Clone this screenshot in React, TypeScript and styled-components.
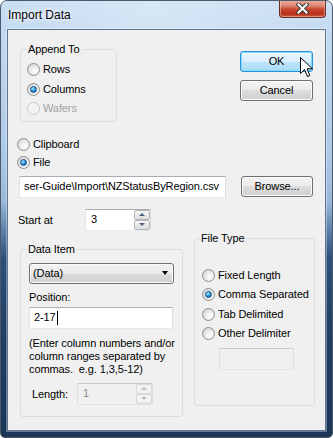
import styled, { createGlobalStyle } from "styled-components"

const GlobalStyle = createGlobalStyle`
  html, body {
    margin: 0;
    padding: 0;
    background: #ffffff;
  }
  body {
    font-family: "Liberation Sans", Arial, sans-serif;
    font-size: 11px;
    letter-spacing: -0.1px;
    color: #000;
  }
`

const Window = styled.div`
  position: relative;
  width: 333px;
  height: 438px;
  box-sizing: border-box;
  display: flex;
  flex-direction: column;
  border: 1px solid #4b5a6b;
  border-radius: 7px 7px 5px 5px;
  overflow: hidden;
  background: linear-gradient(
    180deg,
    #c9def3 0px,
    #bdd6ef 60px,
    #afcae7 150px,
    #9ab8d9 200px,
    #577ca6 232px,
    #2d4f79 258px,
    #213f66 330px,
    #1b3556 438px
  );
`

const TitleBar = styled.div`
  height: 28px;
  display: flex;
  align-items: flex-start;
  justify-content: space-between;
  background: linear-gradient(
    90deg,
    rgba(255, 255, 255, 0) 0%,
    rgba(255, 255, 255, 0.28) 45%,
    rgba(255, 255, 255, 0.05) 100%
  );
`

const Title = styled.span`
  margin: 7px 0 0 7px;
  font-size: 12px;
  line-height: 14px;
  letter-spacing: 0;
  text-shadow: 0 0 6px #ffffff, 0 0 3px #ffffff;
`

const CloseButton = styled.div`
  width: 47px;
  height: 18px;
  margin: -1px 6px 0 0;
  box-sizing: border-box;
  display: flex;
  align-items: center;
  justify-content: center;
  border: 1px solid #6a2a1f;
  border-top: none;
  border-radius: 0 0 4px 4px;
  background: linear-gradient(180deg, #eab1a3 0%, #dc8470 35%, #c8462f 55%, #b8321c 80%, #cf5a3c 100%);
  box-shadow: inset 0 0 0 1px rgba(255, 220, 210, 0.45);
`

const Client = styled.div`
  flex: 1;
  margin: 0 6px 6px 6px;
  box-sizing: border-box;
  border: 1px solid #5f7590;
  background: #f0f0f0;
  padding: 13px 0 0 9px;
  box-shadow: 0 0 0 1px rgba(255, 255, 255, 0.35);
`

const TopRow = styled.div`
  display: flex;
  align-items: flex-start;
  justify-content: space-between;
  padding-right: 12px;
`

const GroupBox = styled.fieldset<{ $w: number; $pad: string }>`
  margin: 0;
  min-width: 0;
  width: ${(p) => p.$w}px;
  box-sizing: border-box;
  border: 1px solid #d5dfe5;
  border-radius: 3px;
  padding: ${(p) => p.$pad};
  display: flex;
  flex-direction: column;
  align-items: flex-start;
`

const Legend = styled.legend<{ $shift: number }>`
  margin-left: ${(p) => p.$shift}px;
  padding: 0 2px 0 1px;
  line-height: 13px;
`

const Option = styled.label<{ $h: number; $disabled?: boolean }>`
  display: flex;
  align-items: center;
  gap: 3px;
  height: ${(p) => p.$h}px;
  line-height: 13px;
  white-space: nowrap;
  color: ${(p) => (p.$disabled ? "#a0a0a0" : "#000")};
`

const RadioDot = styled.span<{ $checked?: boolean; $disabled?: boolean }>`
  position: relative;
  width: 13px;
  height: 13px;
  box-sizing: border-box;
  border-radius: 50%;
  border: 1px solid ${(p) => (p.$disabled ? "#c6c6c6" : "#8c8e90")};
  background: ${(p) =>
    p.$disabled
      ? "#f4f4f4"
      : "radial-gradient(circle at 65% 65%, #fdfdfd 0%, #f2f2f2 30%, #dcdcdc 70%, #cfcfcf 100%)"};
  flex: none;

  &::after {
    content: "";
    display: ${(p) => (p.$checked ? "block" : "none")};
    position: absolute;
    left: 2px;
    top: 2px;
    width: 7px;
    height: 7px;
    box-sizing: border-box;
    border-radius: 50%;
    border: 1px solid #174f83;
    background: radial-gradient(circle at 35% 30%, #a6e6ff 0%, #4ab3ec 35%, #1a74bf 70%, #0f4f8d 100%);
  }
`

const ButtonColumn = styled.div`
  display: flex;
  flex-direction: column;
  gap: 8px;
  margin-top: 8px;
`

const Button = styled.div<{ $w: number; $default?: boolean }>`
  width: ${(p) => p.$w}px;
  height: 21px;
  box-sizing: border-box;
  display: flex;
  align-items: center;
  justify-content: center;
  border-radius: 3px;
  line-height: 13px;
  border: 1px solid ${(p) => (p.$default ? "#2f8fd8" : "#707070")};
  background: ${(p) =>
    p.$default
      ? "linear-gradient(180deg, #eaf6fd 0%, #d9f0fc 50%, #bee6fd 50%, #a9daf5 100%)"
      : "linear-gradient(180deg, #f2f2f2 0%, #ebebeb 50%, #dddddd 50%, #cfcfcf 100%)"};
  box-shadow: inset 0 0 0 1px ${(p) => (p.$default ? "#7fdcfd" : "#fcfcfc")};
`

const SourceList = styled.div`
  display: flex;
  flex-direction: column;
  margin-top: 14px;
`

const PathRow = styled.div`
  display: flex;
  align-items: center;
  margin-top: 4px;
  padding-left: 2px;
  gap: 15px;
`

const Edit = styled.div<{ $w: number; $disabled?: boolean }>`
  width: ${(p) => p.$w}px;
  height: 22px;
  box-sizing: border-box;
  display: flex;
  align-items: center;
  padding: 0 4px;
  white-space: nowrap;
  overflow: hidden;
  line-height: 13px;
  border: 1px solid;
  border-color: ${(p) =>
    p.$disabled ? "#c9ccd0 #dcdee2 #e2e4e8 #dcdee2" : "#abadb3 #dbdfe6 #e3e9ef #e2e3ea"};
  background: ${(p) => (p.$disabled ? "#f0f0f0" : "#ffffff")};
  color: ${(p) => (p.$disabled ? "#8a8a8a" : "#000")};
`

const Caret = styled.span`
  display: inline-block;
  width: 1px;
  height: 14px;
  margin-left: 1px;
  background: #000;
`

const FieldRow = styled.div<{ $top: number; $indent: number }>`
  display: flex;
  align-items: center;
  margin-top: ${(p) => p.$top}px;
  margin-left: ${(p) => p.$indent}px;
`

const FieldLabel = styled.span<{ $w: number }>`
  width: ${(p) => p.$w}px;
  padding-top: 2px;
  line-height: 13px;
`

const Spin = styled.div<{ $w: number; $disabled?: boolean }>`
  width: ${(p) => p.$w}px;
  height: 22px;
  box-sizing: border-box;
  display: flex;
  border: 1px solid;
  border-color: ${(p) =>
    p.$disabled ? "#c9ccd0 #dcdee2 #e2e4e8 #dcdee2" : "#abadb3 #dbdfe6 #e3e9ef #e2e3ea"};
  background: ${(p) => (p.$disabled ? "#f0f0f0" : "#ffffff")};
  color: ${(p) => (p.$disabled ? "#8a8a8a" : "#000")};
`

const SpinText = styled.span`
  flex: 1;
  padding: 3px 0 0 5px;
  line-height: 13px;
`

const SpinButtons = styled.div`
  width: 16px;
  display: flex;
  flex-direction: column;
`

const SpinButton = styled.span<{ $dir: "up" | "down"; $disabled?: boolean }>`
  flex: 1;
  display: flex;
  align-items: center;
  justify-content: center;
  box-sizing: border-box;
  border: 1px solid ${(p) => (p.$disabled ? "#d6d8da" : "#b4b6ba")};
  border-radius: 2px;
  background: ${(p) =>
    p.$disabled ? "#f2f2f2" : "linear-gradient(180deg, #f6f6f6 0%, #e9e9e9 50%, #dcdcdc 100%)"};

  &::after {
    content: "";
    width: 0;
    height: 0;
    border-left: 3px solid transparent;
    border-right: 3px solid transparent;
    ${(p) => (p.$dir === "up" ? "border-bottom" : "border-top")}: 3px solid
      ${(p) => (p.$disabled ? "#b8bcc4" : "#4c5f82")};
  }
`

const BottomRow = styled.div`
  display: flex;
  align-items: flex-start;
  margin-top: 1px;
`

const Combo = styled.div<{ $w: number }>`
  width: ${(p) => p.$w}px;
  height: 21px;
  box-sizing: border-box;
  display: flex;
  align-items: center;
  justify-content: space-between;
  padding: 0 5px 0 3px;
  border: 1px solid #707070;
  border-radius: 3px;
  line-height: 13px;
  background: linear-gradient(180deg, #f2f2f2 0%, #ebebeb 50%, #dddddd 50%, #cfcfcf 100%);
  box-shadow: inset 0 0 0 1px #fcfcfc;

  &::after {
    content: "";
    border-left: 3.5px solid transparent;
    border-right: 3.5px solid transparent;
    border-top: 4px solid #000;
  }
`

const Caption = styled.div<{ $top: number }>`
  margin-top: ${(p) => p.$top}px;
  line-height: 13px;
`

const HelpText = styled.div`
  margin-top: 8px;
  line-height: 13px;
  white-space: pre;
`

const Cursor = styled.svg`
  position: absolute;
  left: 299px;
  top: 56px;
`

const radioRows = ["Fixed Length", "Comma Separated", "Tab Delimited", "Other Delimiter"]

export default function App() {
  return (
    <>
      <GlobalStyle />
      <Window>
        <TitleBar>
          <Title>Import Data</Title>
          <CloseButton>
            <svg width="13" height="11" viewBox="0 0 13 11">
              <path d="M2.5 1.5 L10.5 9.5 M10.5 1.5 L2.5 9.5" stroke="#3b3b3b" strokeWidth="4" strokeLinecap="square" />
              <path d="M2.5 1.5 L10.5 9.5 M10.5 1.5 L2.5 9.5" stroke="#ffffff" strokeWidth="2" strokeLinecap="square" />
            </svg>
          </CloseButton>
        </TitleBar>

        <Client>
          <TopRow>
            <GroupBox $w={97} $pad="4px 6px 2px 6px" style={{ marginLeft: 3 }}>
              <Legend $shift={0}>Append To</Legend>
              <Option $h={19.5}>
                <RadioDot />
                Rows
              </Option>
              <Option $h={19.5}>
                <RadioDot $checked />
                Columns
              </Option>
              <Option $h={19.5} $disabled>
                <RadioDot $disabled />
                Wafers
              </Option>
            </GroupBox>
            <ButtonColumn>
              <Button $w={73} $default>OK</Button>
              <Button $w={73}>Cancel</Button>
            </ButtonColumn>
          </TopRow>

          <SourceList>
            <Option $h={18}>
              <RadioDot />
              Clipboard
            </Option>
            <Option $h={18}>
              <RadioDot $checked />
              File
            </Option>
          </SourceList>

          <PathRow>
            <Edit $w={207}>ser-Guide\Import\NZStatusByRegion.csv</Edit>
            <Button $w={72}>Browse...</Button>
          </PathRow>

          <FieldRow $top={11} $indent={1}>
            <FieldLabel $w={67}>Start at</FieldLabel>
            <Spin $w={66}>
              <SpinText>3</SpinText>
              <SpinButtons>
                <SpinButton $dir="up" />
                <SpinButton $dir="down" />
              </SpinButtons>
            </Spin>
          </FieldRow>

          <BottomRow>
            <GroupBox $w={163} $pad="7px 8px 11px 8px" style={{ marginLeft: 3, marginTop: 11 }}>
              <Legend $shift={-2}>Data Item</Legend>
              <Combo $w={145}>(Data)</Combo>
              <Caption $top={7}>Position:</Caption>
              <Edit $w={144} style={{ marginTop: 3 }}>
                2-17
                <Caret />
              </Edit>
              <HelpText>
                {"(Enter column numbers and/or\ncolumn ranges separated by\ncommas.  e.g. 1,3,5-12)"}
              </HelpText>
              <FieldRow $top={7} $indent={3}>
                <FieldLabel $w={45}>Length:</FieldLabel>
                <Spin $w={76} $disabled>
                  <SpinText>1</SpinText>
                  <SpinButtons>
                    <SpinButton $dir="up" $disabled />
                    <SpinButton $dir="down" $disabled />
                  </SpinButtons>
                </Spin>
              </FieldRow>
            </GroupBox>

            <GroupBox $w={121} $pad="21px 7px 35px 7px" style={{ marginLeft: 11 }}>
              <Legend $shift={-2}>File Type</Legend>
              {radioRows.map((label) => (
                <Option key={label} $h={19.5}>
                  <RadioDot $checked={label === "Comma Separated"} />
                  {label}
                </Option>
              ))}
              <Edit $w={75} $disabled style={{ marginTop: 4, marginLeft: 17 }} />
            </GroupBox>
          </BottomRow>
        </Client>

        <Cursor width="14" height="21" viewBox="0 0 14 21">
          <path
            d="M0.5 0.5 L0.5 16.5 L4.5 12.5 L7.5 19.5 L9.8 18.5 L7 11.8 L12.5 11.8 Z"
            fill="#ffffff"
            stroke="#000000"
            strokeWidth="1"
            strokeLinejoin="miter"
          />
        </Cursor>
      </Window>
    </>
  )
}
